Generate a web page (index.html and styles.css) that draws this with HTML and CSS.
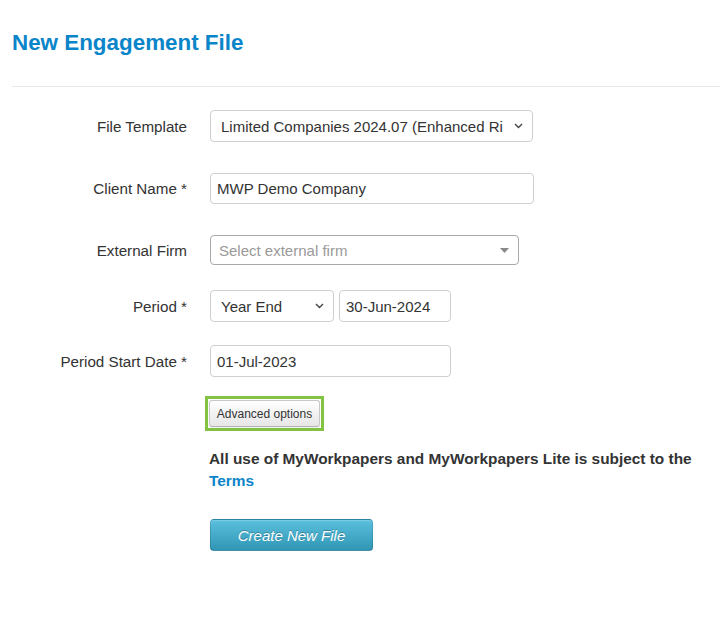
FILE: index.html
```html
<!DOCTYPE html>
<html lang="en">
<head>
<meta charset="utf-8">
<title>New Engagement File</title>
<link rel="stylesheet" href="styles.css">
</head>
<body>
<div class="page">
  <h1 class="title">New Engagement File</h1>
  <hr class="divider">
  <form class="form">
    <div class="row row-first">
      <label class="label">File Template</label>
      <div class="field select w-323">
        <span class="value">Limited Companies 2024.07 (Enhanced Ri</span>
        <svg class="chev" width="9" height="6" viewBox="0 0 9 6"><path d="M1 1l3.5 3.5L8 1" fill="none" stroke="#444" stroke-width="1.4"/></svg>
      </div>
    </div>
    <div class="row row-gap31">
      <label class="label">Client Name *</label>
      <div class="field input w-324 h-31"><span class="value">MWP Demo Company</span></div>
    </div>
    <div class="row row-gap31">
      <label class="label">External Firm</label>
      <div class="field select2 w-309 h-30">
        <span class="placeholder">Select external firm</span>
        <svg class="tri" width="9" height="5" viewBox="0 0 9 5"><path d="M0 0h9L4.5 5z" fill="#888"/></svg>
      </div>
    </div>
    <div class="row row-gap25">
      <label class="label">Period *</label>
      <div class="pair">
        <div class="field select w-124">
          <span class="value">Year End</span>
          <svg class="chev" width="9" height="6" viewBox="0 0 9 6"><path d="M1 1l3.5 3.5L8 1" fill="none" stroke="#444" stroke-width="1.4"/></svg>
        </div>
        <div class="field input w-112"><span class="value">30-Jun-2024</span></div>
      </div>
    </div>
    <div class="row row-gap23">
      <label class="label">Period Start Date *</label>
      <div class="field input w-241"><span class="value">01-Jul-2023</span></div>
    </div>
    <div class="row row-gap19">
      <span class="label"></span>
      <div class="highlight"><button type="button" class="btn-small">Advanced options</button></div>
    </div>
    <div class="row row-gap17 row-top">
      <span class="label"></span>
      <p class="terms">All use of MyWorkpapers and MyWorkpapers Lite is subject to the<br><a class="link" href="#">Terms</a></p>
    </div>
    <div class="row row-gap27">
      <span class="label"></span>
      <button type="button" class="btn-info">Create New File</button>
    </div>
  </form>
</div>
</body>
</html>
```
FILE: styles.css
```css
html, body {
  margin: 0;
  padding: 0;
  background: #fff;
}
body {
  font-family: "Liberation Sans", Arial, sans-serif;
  color: #333;
}
.page {
  padding-left: 12px;
}
.title {
  margin: 31px 0 0;
  font-size: 22.4px;
  line-height: 24px;
  font-weight: bold;
  color: #0a85c9;
}
.divider {
  margin: 31px 0 0;
  border: 0;
  border-top: 1px solid #e8e8e8;
  height: 0;
}
.form {
  display: flex;
  flex-direction: column;
  padding-top: 23px;
}
.row {
  display: grid;
  grid-template-columns: 175px auto;
  column-gap: 23px;
  align-items: center;
  justify-content: start;
}
.row-top { align-items: start; }
.row-gap31 { margin-top: 31px; }
.row-gap25 { margin-top: 25px; }
.row-gap23 { margin-top: 23px; }
.row-gap19 { margin-top: 19px; }
.row-gap17 { margin-top: 17px; }
.row-gap27 { margin-top: 27px; }
.label {
  text-align: right;
  font-size: 15.2px;
  color: #333;
}
.field {
  box-sizing: border-box;
  height: 32px;
  border: 1px solid #cfcfcf;
  border-radius: 4px;
  background: #fff;
  display: flex;
  align-items: center;
  font-size: 15px;
  color: #333;
  white-space: nowrap;
  overflow: hidden;
}
.select {
  padding: 0 9px 0 10px;
  justify-content: space-between;
}
.input {
  padding: 0 6px;
}
.select2 {
  padding: 0 9px 0 8px;
  justify-content: space-between;
  border-color: #aaa;
}
.placeholder { color: #999; }
.chev { flex: none; margin-left: 6px; }
.tri { flex: none; }
.w-323 { width: 323px; }
.w-324 { width: 324px; }
.w-309 { width: 309px; }
.w-124 { width: 124px; }
.w-112 { width: 112px; }
.w-241 { width: 241px; }
.h-31 { height: 31px; }
.h-30 { height: 30px; }
.pair {
  display: flex;
  gap: 5px;
}
.highlight {
  justify-self: start;
  margin-left: -5px;
  border: 3px solid #82c341;
  padding: 1px;
  display: flex;
}
.btn-small {
  box-sizing: border-box;
  height: 27px;
  width: 111px;
  padding: 0;
  font-family: "Liberation Sans", Arial, sans-serif;
  font-size: 12px;
  color: #333;
  border: 1px solid #c8c8c8;
  border-bottom-color: #b3b3b3;
  border-radius: 3px;
  background: linear-gradient(#ffffff, #e6e6e6);
  box-shadow: inset 0 1px 0 rgba(255,255,255,.2), 0 1px 2px rgba(0,0,0,.05);
}
.terms {
  margin: 0;
  margin-left: -1px;
  font-size: 15.4px;
  line-height: 22px;
  font-weight: bold;
  color: #333;
}
.link {
  color: #0a85c9;
  text-decoration: none;
}
.btn-info {
  justify-self: start;
  box-sizing: border-box;
  height: 32px;
  width: 163px;
  padding: 0;
  font-family: "Liberation Sans", Arial, sans-serif;
  font-size: 15px;
  font-style: italic;
  color: #fff;
  border: 1px solid rgba(0,0,0,.12);
  border-bottom-color: rgba(0,0,0,.25);
  border-radius: 4px;
  background: linear-gradient(#5bc0de, #2f96b4);
  box-shadow: inset 0 1px 0 rgba(255,255,255,.2), 0 1px 2px rgba(0,0,0,.05);
  text-shadow: 0 -1px 0 rgba(0,0,0,.25);
}
```
